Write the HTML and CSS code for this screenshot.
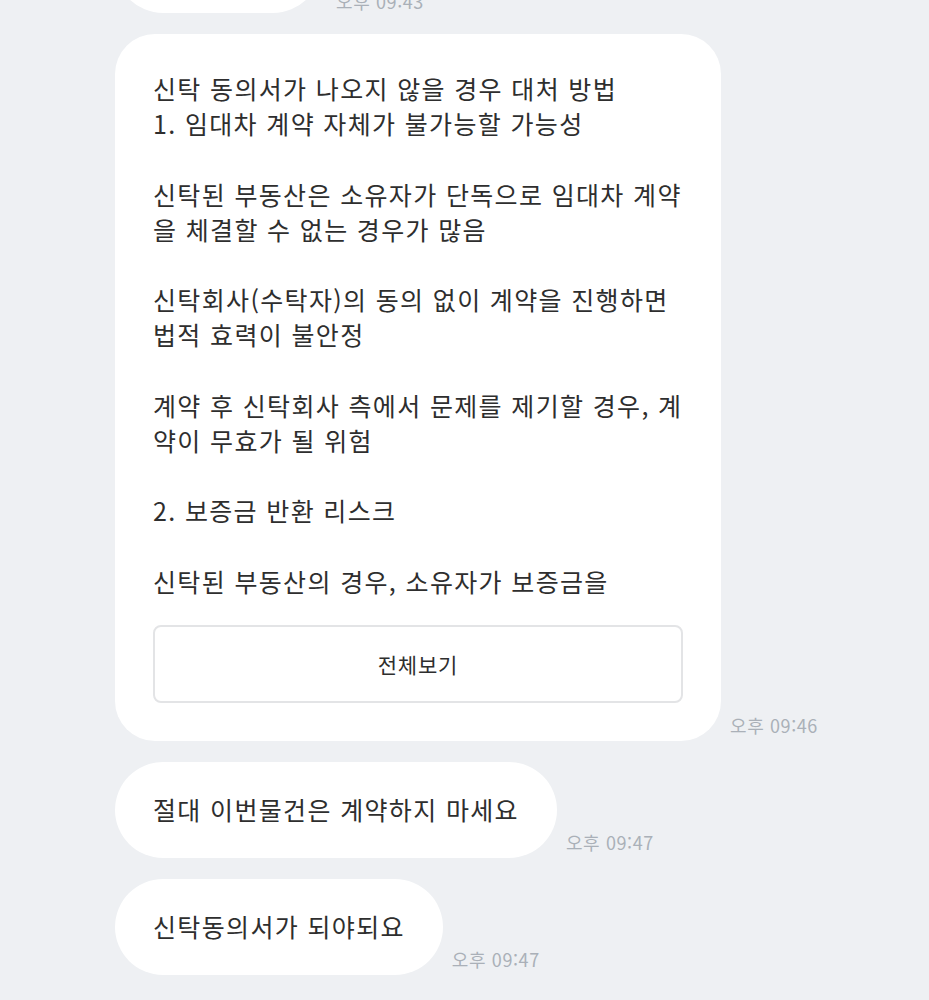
FILE: index.html
```html
<!DOCTYPE html>
<html lang="ko">
<head>
<meta charset="utf-8">
<link rel="stylesheet" href="styles.css">
</head>
<body>
<div class="chat">
  <div class="row row-first">
    <div class="bubble pill">이전 메시지</div>
    <span class="time">오후 09:43</span>
  </div>
  <div class="row">
    <div class="bubble long">
      <div class="text">신탁 동의서가 나오지 않을 경우 대처 방법
1. 임대차 계약 자체가 불가능할 가능성

신탁된 부동산은 소유자가 단독으로 임대차 계약을 체결할 수 없는 경우가 많음

신탁회사(수탁자)의 동의 없이 계약을 진행하면 법적 효력이 불안정

계약 후 신탁회사 측에서 문제를 제기할 경우, 계약이 무효가 될 위험

2. 보증금 반환 리스크

신탁된 부동산의 경우, 소유자가 보증금을</div>
      <button class="more">전체보기</button>
    </div>
    <span class="time">오후 09:46</span>
  </div>
  <div class="row">
    <div class="bubble pill">절대 이번물건은 계약하지 마세요</div>
    <span class="time">오후 09:47</span>
  </div>
  <div class="row">
    <div class="bubble pill">신탁동의서가 되야되요</div>
    <span class="time">오후 09:47</span>
  </div>
</div>
</body>
</html>
```
FILE: styles.css
```css
html, body {
  margin: 0;
  padding: 0;
  background: #eef0f3;
  height: 1000px;
  overflow: hidden;
}
body {
  font-family: "Noto Sans CJK KR", "Noto Sans", sans-serif;
  color: #2e2e2e;
}
.chat {
  display: flex;
  flex-direction: column;
  gap: 21px;
  padding-left: 115px;
}
.row {
  display: flex;
  align-items: flex-end;
  gap: 9px;
}
.row-first {
  margin-top: -83px;
}
.row-first .bubble {
  width: 130px;
  color: transparent;
  white-space: nowrap;
  overflow: hidden;
}
.row-first .time {
  margin-bottom: 2px;
  margin-left: 6px;
}
.bubble {
  background: #ffffff;
  font-size: 25px;
  line-height: 35px;
  letter-spacing: 1.35px;
}
.pill {
  padding: 30px 38px 31px 38px;
  border-radius: 48px;
}
.long {
  width: 530px;
  padding: 37px 38px 38px;
  border-radius: 40px;
}
.text {
  white-space: pre-line;
  word-break: break-all;
  line-height: 35.2px;
  margin-right: -12px;
}
.more {
  display: block;
  width: 100%;
  height: 78px;
  margin-top: 26px;
  background: #fff;
  border: 2px solid #e3e4e6;
  border-radius: 8px;
  font-family: inherit;
  font-size: 21px;
  letter-spacing: 0.8px;
  color: #2e2e2e;
  cursor: pointer;
}
.time {
  font-size: 18px;
  line-height: 20px;
  letter-spacing: 0.6px;
  color: #aab0b8;
  margin-bottom: 6px;
  white-space: nowrap;
}
```
